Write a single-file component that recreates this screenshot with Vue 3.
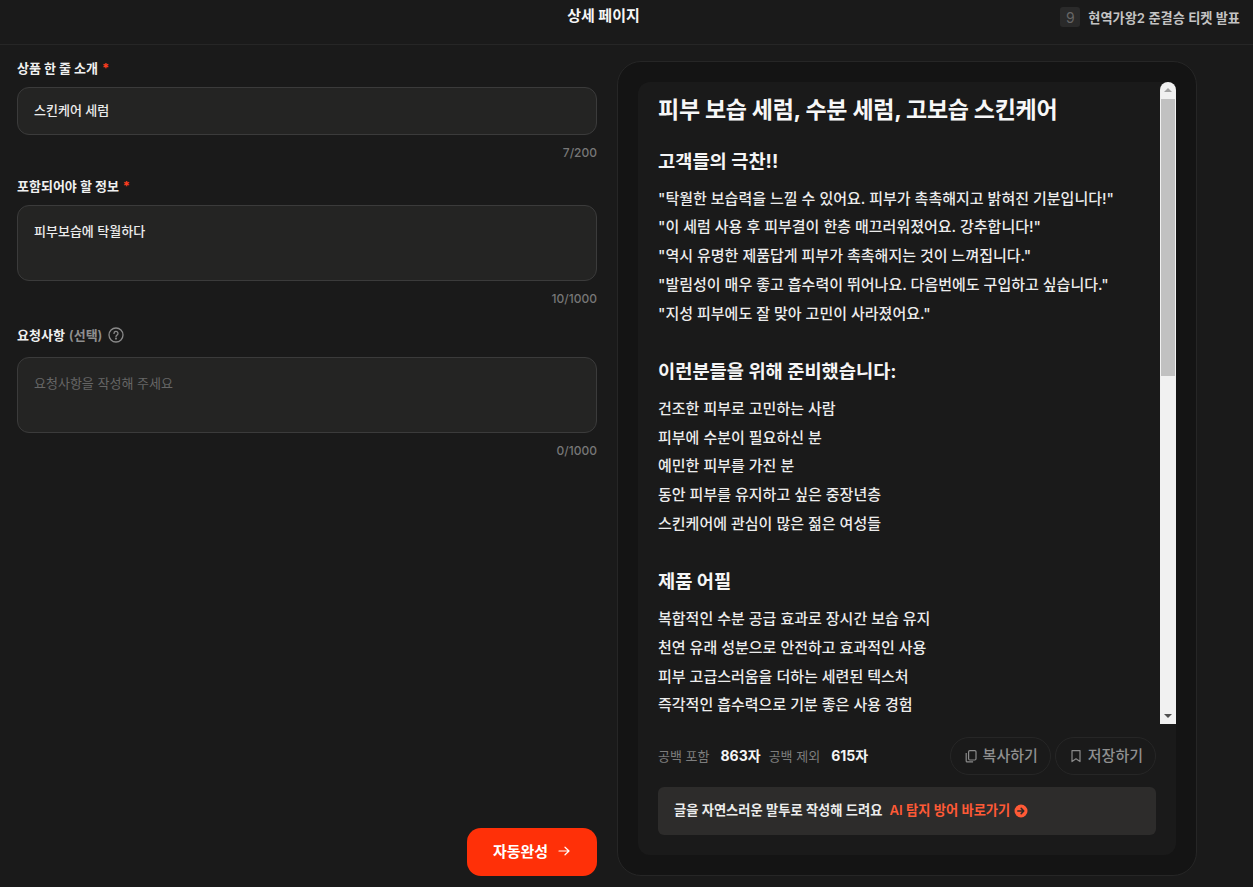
<script setup>
const reviews = [
  '"탁월한 보습력을 느낄 수 있어요. 피부가 촉촉해지고 밝혀진 기분입니다!"',
  '"이 세럼 사용 후 피부결이 한층 매끄러워졌어요. 강추합니다!"',
  '"역시 유명한 제품답게 피부가 촉촉해지는 것이 느껴집니다."',
  '"발림성이 매우 좋고 흡수력이 뛰어나요. 다음번에도 구입하고 싶습니다."',
  '"지성 피부에도 잘 맞아 고민이 사라졌어요."'
]
const targets = [
  '건조한 피부로 고민하는 사람',
  '피부에 수분이 필요하신 분',
  '예민한 피부를 가진 분',
  '동안 피부를 유지하고 싶은 중장년층',
  '스킨케어에 관심이 많은 젊은 여성들'
]
const appeals = [
  '복합적인 수분 공급 효과로 장시간 보습 유지',
  '천연 유래 성분으로 안전하고 효과적인 사용',
  '피부 고급스러움을 더하는 세련된 텍스처',
  '즉각적인 흡수력으로 기분 좋은 사용 경험'
]
</script>

<template>
  <div class="page">
    <header class="topbar">
      <h1 class="title">상세 페이지</h1>
      <div class="news">
        <span class="rank">9</span>
        <span class="news-text">현역가왕2 준결승 티켓 발표</span>
      </div>
    </header>
    <main class="body">
      <section class="form">
        <div class="field">
          <label class="label">상품 한 줄 소개 <i class="req">*</i></label>
          <div class="box box-input">스킨케어 세럼</div>
          <div class="count">7/200</div>
        </div>
        <div class="field">
          <label class="label">포함되어야 할 정보 <i class="req">*</i></label>
          <div class="box box-area">피부보습에 탁월하다</div>
          <div class="count">10/1000</div>
        </div>
        <div class="field">
          <label class="label">요청사항 <span class="opt">(선택)</span>
            <svg class="help" width="16" height="16" viewBox="0 0 16 16" fill="none" stroke="#8a8a8a" stroke-width="1.3" stroke-linecap="round">
              <circle cx="8" cy="8" r="7" />
              <path d="M6 6.4a2 2 0 1 1 3 1.7c-.6.4-1 .8-1 1.5" />
              <circle cx="8" cy="11.6" r=".4" fill="#8a8a8a" />
            </svg>
          </label>
          <div class="box box-area placeholder">요청사항을 작성해 주세요</div>
          <div class="count">0/1000</div>
        </div>
        <button class="submit">자동완성
          <svg width="14" height="14" viewBox="0 0 14 14" fill="none" stroke="#fff" stroke-width="1.2" stroke-linecap="round" stroke-linejoin="round">
            <path d="M2 7h10M8 3.2 12 7l-4 3.8" />
          </svg>
        </button>
      </section>

      <aside class="panel">
        <div class="card">
          <div class="viewer">
            <article class="doc">
              <h2 class="doc-title">피부 보습 세럼, 수분 세럼, 고보습 스킨케어</h2>
              <h3 class="doc-head first">고객들의 극찬!!</h3>
              <p v-for="r in reviews" :key="r" class="line">{{ r }}</p>
              <h3 class="doc-head">이런분들을 위해 준비했습니다:</h3>
              <p v-for="t in targets" :key="t" class="line">{{ t }}</p>
              <h3 class="doc-head">제품 어필</h3>
              <p v-for="a in appeals" :key="a" class="line">{{ a }}</p>
            </article>
            <div class="scrollbar">
              <span class="arrow up"></span>
              <span class="thumb"></span>
              <span class="arrow down"></span>
            </div>
          </div>
          <div class="stats">
            <span class="stat-label">공백 포함</span>
            <b class="stat-val">863자</b>
            <span class="stat-label">공백 제외</span>
            <b class="stat-val">615자</b>
            <div class="actions">
              <button class="ghost">
                <svg width="14" height="14" viewBox="0 0 14 14" fill="none" stroke="#8a8a8a" stroke-width="1.2" stroke-linejoin="round">
                  <rect x="4.6" y="1.6" width="7.4" height="9.4" rx="1.2" />
                  <path d="M2.2 4v8a.9.9 0 0 0 .9.9h6" />
                </svg>
                <span class="ghost-text">복사하기</span>
              </button>
              <button class="ghost">
                <svg width="14" height="14" viewBox="0 0 14 14" fill="none" stroke="#8a8a8a" stroke-width="1.2" stroke-linejoin="round">
                  <path d="M3 1.6h8v11L7 9.8l-4 2.8z" />
                </svg>
                <span class="ghost-text">저장하기</span>
              </button>
            </div>
          </div>
          <div class="promo">
            <span class="promo-text">글을 자연스러운 말투로 작성해 드려요</span>
            <a class="promo-link">AI 탐지 방어 바로가기
              <svg class="promo-icon" width="14" height="14" viewBox="0 0 14 14">
                <circle cx="7" cy="7" r="6.5" fill="#ff5a36" />
                <path d="M3.8 7h6M7.2 4.4 9.8 7l-2.6 2.6" fill="none" stroke="#2b2a29" stroke-width="1.5" stroke-linecap="round" stroke-linejoin="round" />
              </svg>
            </a>
          </div>
        </div>
      </aside>
    </main>
  </div>
</template>

<style>
html, body { margin: 0; background: #1a1a1a; }
</style>

<style scoped>
.page {
  width: 1253px;
  height: 887px;
  overflow: hidden;
  background: #1a1a1a;
  color: #f2f2f2;
  font-family: Inter, "Noto Sans CJK KR", sans-serif;
  display: flex;
  flex-direction: column;
}
.topbar {
  height: 44px;
  flex: none;
  border-bottom: 1px solid #262626;
  position: relative;
  display: flex;
  align-items: flex-start;
  justify-content: center;
}
.title {
  margin: 5px 0 0;
  line-height: 22px;
  font-size: 15px;
  font-weight: 700;
  color: #f5f5f5;
  transform: translateX(-23px);
}
.news {
  position: absolute;
  right: 13px;
  top: 7px;
  display: flex;
  align-items: center;
  gap: 8px;
}
.rank {
  width: 20px;
  height: 20px;
  border-radius: 3px;
  background: #2a2a2a;
  color: #666;
  font-size: 14px;
  display: flex;
  align-items: center;
  justify-content: center;
}
.news-text { font-size: 13.2px; font-weight: 600; color: #c4c4c4; }
.body { flex: 1; display: flex; min-height: 0; }
.form {
  width: 580px;
  margin-left: 17px;
  padding-top: 13px;
  display: flex;
  flex-direction: column;
  height: 831px;
  box-sizing: border-box;
}
.field { display: flex; flex-direction: column; margin-bottom: 14px; }
.field:nth-child(2) { margin-bottom: 17px; }
.field:nth-child(3) .label { margin-bottom: 12px; }
.label {
  height: 20px;
  line-height: 20px;
  font-size: 13px;
  font-weight: 700;
  color: #f0f0f0;
  margin-bottom: 9px;
  display: flex;
  align-items: center;
  gap: 4px;
}
.req { font-style: normal; color: #ff3d1f; }
.opt { color: #8f8f8f; font-weight: 600; }
.help { margin-left: 2px; }
.box {
  box-sizing: border-box;
  border: 1px solid #3b3b3b;
  border-radius: 12px;
  background: #242423;
  padding: 0 16px;
  font-size: 13px;
  font-weight: 500;
  color: #ececec;
}
.box-input { height: 48px; line-height: 45px; }
.box-area { height: 76px; padding-top: 15px; line-height: 20px; }
.placeholder { color: #666; font-weight: 400; }
.count {
  height: 18px;
  line-height: 18px;
  margin-top: 9px;
  text-align: right;
  font-size: 12px;
  font-weight: 500;
  color: #777;
}
.submit {
  margin-top: auto;
  align-self: flex-end;
  width: 130px;
  height: 48px;
  border: 0;
  border-radius: 14px;
  background: #ff3008;
  color: #fff;
  font: 700 15px Inter, "Noto Sans CJK KR", sans-serif;
  display: flex;
  align-items: center;
  justify-content: center;
  gap: 9px;
  padding: 0 0 3px;
}
.panel {
  box-sizing: border-box;
  width: 580px;
  height: 815px;
  margin: 16px 0 0 20px;
  padding: 20px;
  background: #141414;
  border: 1px solid #262626;
  border-radius: 24px;
}
.card {
  height: 773px;
  background: #1a1a1a;
  border-radius: 12px;
  display: flex;
  flex-direction: column;
}
.viewer { height: 642px; display: flex; flex: none; overflow: hidden; }
.doc { flex: 1; min-width: 0; padding: 12px 0 0 20px; }
.doc-title {
  margin: 0;
  height: 32px;
  line-height: 32px;
  font-size: 23px;
  font-weight: 700;
  color: #f7f7f7;
  letter-spacing: -0.28px;
  white-space: nowrap;
}
.doc-head {
  margin: 29.75px 0 8.5px;
  height: 28px;
  line-height: 28px;
  font-size: 18.7px;
  font-weight: 700;
  color: #f5f5f5;
}
.doc-head.first { margin-top: 22px; }
.line {
  margin: 0;
  height: 28.8px;
  line-height: 28.8px;
  font-size: 15px;
  font-weight: 500;
  color: #ececec;
  white-space: nowrap;
}
.scrollbar {
  width: 16px;
  flex: none;
  background: #f1f1f1;
  border-radius: 8px 8px 0 0;
  position: relative;
}
.thumb {
  position: absolute;
  left: 1px;
  right: 1px;
  top: 17px;
  height: 277px;
  background: #c1c1c1;
}
.arrow {
  position: absolute;
  left: 4px;
  width: 0;
  height: 0;
  border-left: 4px solid transparent;
  border-right: 4px solid transparent;
}
.arrow.up { top: 6px; border-bottom: 4px solid #a3a3a3; }
.arrow.down { bottom: 6px; border-top: 4px solid #505050; }
.stats {
  height: 38px;
  margin-top: 13px;
  padding: 0 20px;
  display: flex;
  align-items: center;
  font-size: 13px;
}
.stat-label { color: #7d7d7d; margin: -2px 11px 0 0; }
.stat-val { color: #f5f5f5; font-size: 14px; font-weight: 700; margin: -2px 8px 0 0; }
.actions { margin-left: auto; display: flex; gap: 4px; }
.ghost {
  height: 38px;
  padding: 0 12px 0 13px;
  border: 1px solid #262626;
  border-radius: 19px;
  background: transparent;
  color: #8f8f8f;
  font: 500 15px Inter, "Noto Sans CJK KR", sans-serif;
  display: flex;
  align-items: center;
  gap: 5px;
}
.ghost-text { margin-top: -3px; }
.promo {
  margin: 12px 20px 0;
  height: 48px;
  box-sizing: border-box;
  border-radius: 6px;
  background: #2d2c2b;
  padding: 0 13px 3px 16px;
  display: flex;
  align-items: center;
  gap: 7px;
  font-size: 13.25px;
  font-weight: 600;
}
.promo-text { color: #ececec; }
.promo-link { color: #ff5a36; display: flex; align-items: center; gap: 4px; }
.promo-icon { margin-top: 3px; }
</style>
